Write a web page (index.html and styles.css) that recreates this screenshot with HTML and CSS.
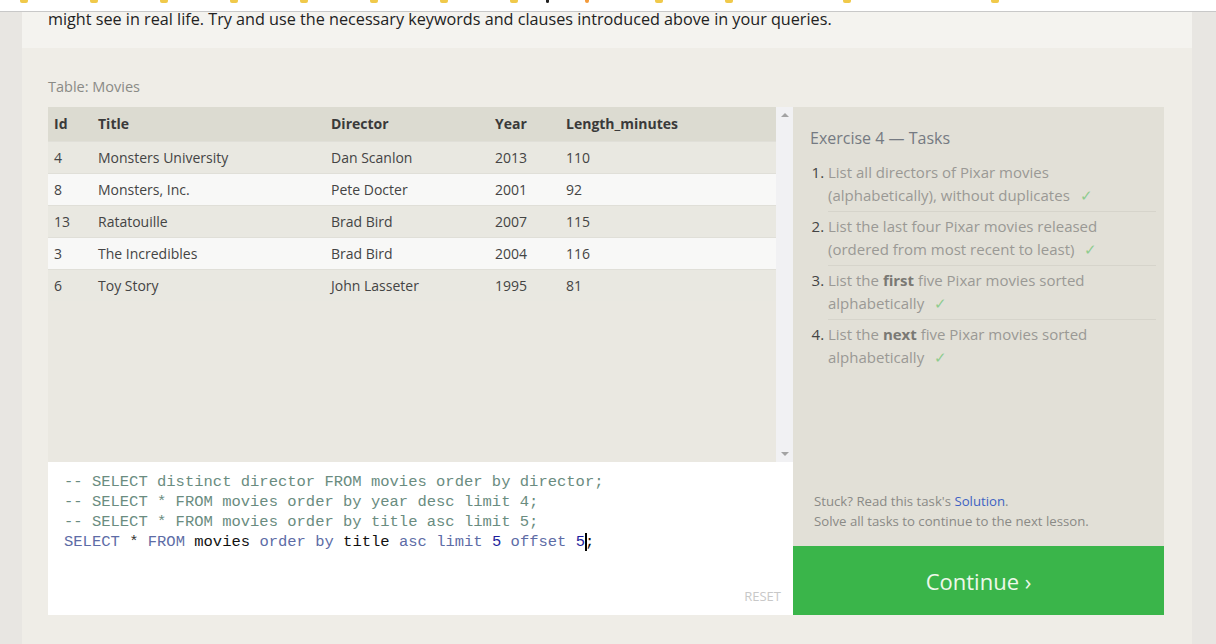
FILE: index.html
```html
<!DOCTYPE html>
<html lang="en">
<head>
<meta charset="utf-8">
<title>SQL Lesson — Exercise 4</title>
<link rel="stylesheet" href="styles.css">
</head>
<body>
<div class="topbar">
  <span class="bm"></span><span class="bm"></span><span class="bm"></span><span class="bm"></span><span class="bm"></span><span class="bm"></span><span class="bm"></span><span class="bm"></span><span class="bm"></span><span class="bm"></span><span class="bm"></span><span class="bm"></span><span class="bm"></span><span class="bm"></span>
</div>
<div class="page">
  <div class="intro">might see in real life. Try and use the necessary keywords and clauses introduced above in your queries.</div>
  <div class="exercise">
    <div class="table-label">Table: Movies</div>
    <div class="grid">
      <div class="left">
        <div class="table-box">
          <div class="table-wrap">
            <table class="movies">
              <thead>
                <tr><th class="c-id">Id</th><th class="c-title">Title</th><th class="c-dir">Director</th><th class="c-year">Year</th><th>Length_minutes</th></tr>
              </thead>
              <tbody>
                <tr><td>4</td><td>Monsters University</td><td>Dan Scanlon</td><td>2013</td><td>110</td></tr>
                <tr><td>8</td><td>Monsters, Inc.</td><td>Pete Docter</td><td>2001</td><td>92</td></tr>
                <tr><td>13</td><td>Ratatouille</td><td>Brad Bird</td><td>2007</td><td>115</td></tr>
                <tr><td>3</td><td>The Incredibles</td><td>Brad Bird</td><td>2004</td><td>116</td></tr>
                <tr><td>6</td><td>Toy Story</td><td>John Lasseter</td><td>1995</td><td>81</td></tr>
              </tbody>
            </table>
          </div>
          <div class="scrollbar">
            <span class="arrow up"></span>
            <span class="arrow down"></span>
          </div>
        </div>
        <div class="editor">
<pre class="code"><span class="cm">-- SELECT distinct director FROM movies order by director;</span>
<span class="cm">-- SELECT * FROM movies order by year desc limit 4;</span>
<span class="cm">-- SELECT * FROM movies order by title asc limit 5;</span>
<span class="kw">SELECT</span> <span class="op">*</span> <span class="kw">FROM</span> movies <span class="kw">order by</span> title <span class="kw">asc</span> <span class="kw">limit</span> <span class="num">5</span> <span class="kw">offset</span> <span class="num">5</span><span class="caret"></span>;</pre>
          <div class="reset">RESET</div>
        </div>
      </div>
      <div class="right">
        <div class="tasks">
          <h3 class="tasks-title">Exercise 4 — Tasks</h3>
          <ol class="task-list">
            <li>List all directors of Pixar movies (alphabetically), without duplicates <span class="check">✓</span></li>
            <li>List the last four Pixar movies released (ordered from most recent to least) <span class="check">✓</span></li>
            <li>List the <strong class="em">first</strong> five Pixar movies sorted alphabetically <span class="check">✓</span></li>
            <li>List the <strong class="em">next</strong> five Pixar movies sorted alphabetically <span class="check">✓</span></li>
          </ol>
          <div class="stuck">
            <div>Stuck? Read this task's <a href="#">Solution</a>.</div>
            <div>Solve all tasks to continue to the next lesson.</div>
          </div>
        </div>
        <div class="continue">Continue ›</div>
      </div>
    </div>
  </div>
</div>
</body>
</html>
```

FILE: styles.css
```css
* { box-sizing: border-box; }
html, body { margin: 0; padding: 0; }
body {
  background: #e8e6e2;
  font-family: "Open Sans", "Noto Sans", sans-serif;
  color: #333;
  height: 644px;
  overflow: hidden;
}
.topbar {
  height: 12px;
  background: #fff;
  border-bottom: 1px solid #c8c8c8;
  display: flex;
  align-items: flex-start;
  padding-left: 20px;
}
.bm {
  width: 8px;
  height: 3px;
  background: #f0c94a;
  border-radius: 0 0 2px 2px;
  margin-right: 62px;
}
.bm:nth-child(8) { margin-right: 28px; }
.bm:nth-child(9) { background: #222; width: 3px; margin-right: 36px; }
.bm:nth-child(10) { background: #f39a3a; width: 4px; margin-right: 66px; }
.bm:nth-child(12) { margin-right: 110px; }
.bm:nth-child(13) { margin-right: 140px; }
.page {
  margin: 0 24px 0 22px;
  background: #efede7;
}
.intro {
  background: #f4f3ef;
  height: 36px;
  padding: 0 26px;
  font-size: 16.2px;
  line-height: 14px;
  color: #222;
}
.exercise {
  padding: 29px 27px 29px 26px;
  background: #efede7;
}
.table-label {
  font-size: 14.5px;
  line-height: 20px;
  color: #8a8a86;
  margin-bottom: 10px;
}
.grid {
  display: flex;
}
.left {
  width: 745px;
  display: flex;
  flex-direction: column;
}
.table-box {
  height: 355px;
  display: flex;
  background: #eae8e1;
}
.table-wrap {
  flex: 1;
}
.movies {
  width: 100%;
  border-collapse: collapse;
  font-size: 14px;
  color: #444;
}
.movies th {
  background: #dcdbd1;
  font-weight: 700;
  text-align: left;
  height: 34px;
  padding: 0 6px;
  color: #3a3a3a;
}
.movies td {
  height: 32px;
  padding: 0 6px;
  border-top: 1px solid #e0dfd8;
}
.movies th.c-id { width: 44px; }
.movies th.c-title { width: 233px; }
.movies th.c-dir { width: 164px; }
.movies th.c-year { width: 71px; }
.movies tbody tr:nth-child(odd) td { background: #e9e8e1; }
.movies tbody tr:nth-child(even) td { background: #f8f8f7; }
.scrollbar {
  width: 17px;
  background: #f1f1f3;
  display: flex;
  flex-direction: column;
  justify-content: space-between;
  align-items: center;
  padding: 6px 0;
}
.arrow {
  width: 0; height: 0;
  border-left: 4px solid transparent;
  border-right: 4px solid transparent;
}
.arrow.up { border-bottom: 4px solid #a3a3a3; }
.arrow.down { border-top: 4px solid #a3a3a3; }
.editor {
  height: 153px;
  background: #fff;
  position: relative;
  padding: 10px 0 0 16px;
}
.code {
  margin: 0;
  font-family: "Liberation Mono", "DejaVu Sans Mono", monospace;
  font-size: 15.5px;
  line-height: 20px;
  color: #111;
}
.cm { color: #6a8c80; }
.kw { color: #5d6ca6; }
.op { color: #333; }
.num { color: #1d1d9c; }
.caret {
  display: inline-block;
  width: 2px;
  height: 18px;
  background: #000;
  vertical-align: -5px;
  margin-right: -2px;
}
.reset {
  position: absolute;
  right: 12px;
  bottom: 10px;
  font-size: 13px;
  color: #c8c8c8;
}
.right {
  width: 371px;
  display: flex;
  flex-direction: column;
}
.tasks {
  background: #e2e0d7;
  height: 439px;
  padding: 20px 8px 0 17px;
  display: flex;
  flex-direction: column;
}
.tasks-title {
  margin: 0 0 12px;
  font-size: 16px;
  font-weight: 400;
  color: #757a82;
  line-height: 22px;
}
.task-list {
  margin: 0;
  padding: 0 0 0 18px;
  font-size: 15px;
  line-height: 23px;
  color: #9a9995;
}
.task-list li {
  padding: 0 0 4px 0;
  margin-bottom: 3px;
  border-bottom: 1px solid #d6d4cb;
}
.task-list li:last-child { border-bottom: none; }
.task-list li::marker { color: #444; }
.task-list .em { color: #7a7974; font-weight: 700; }
.check { color: #8fcc8f; margin-left: 6px; }
.stuck {
  margin-top: auto;
  padding: 0 0 15px 4px;
  font-size: 13.2px;
  line-height: 20px;
  color: #8a8a86;
}
.stuck a { color: #3d62c3; text-decoration: none; }
.continue {
  height: 69px;
  background: #3ab54a;
  color: #eef8ea;
  font-size: 22px;
  display: flex;
  align-items: center;
  justify-content: center;
}
```
